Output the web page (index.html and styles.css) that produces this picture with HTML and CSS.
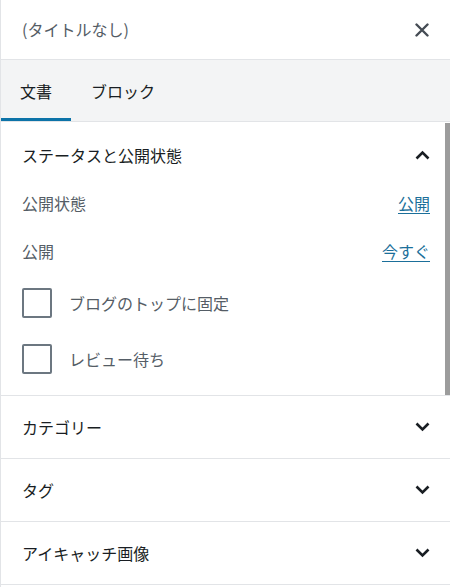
FILE: index.html
```html
<!DOCTYPE html>
<html lang="ja">
<head>
<meta charset="utf-8">
<title>サイドバー</title>
<link rel="stylesheet" href="styles.css">
</head>
<body>
<div class="sidebar">
  <div class="header">
    <span class="title">(タイトルなし)</span>
    <svg class="close" width="14" height="14" viewBox="0 0 14 14"><path d="M1.5 1.5 L12.5 12.5 M12.5 1.5 L1.5 12.5" stroke="#454c54" stroke-width="2.4" stroke-linecap="round" fill="none"/></svg>
  </div>
  <div class="tabs">
    <div class="tab active">文書</div>
    <div class="tab">ブロック</div>
  </div>
  <div class="content">
    <div class="thumb"></div>
    <div class="panel open">
      <div class="panel-head">
        <span>ステータスと公開状態</span>
        <svg class="chev" width="15" height="10" viewBox="0 0 15 10"><path d="M1.5 8.5 L7.5 2.5 L13.5 8.5" stroke="#191e23" stroke-width="2.6" fill="none"/></svg>
      </div>
      <div class="panel-body">
        <div class="row r1"><span>公開状態</span><a class="link">公開</a></div>
        <div class="row r2"><span>公開</span><a class="link">今すぐ</a></div>
        <div class="check c1"><span class="box"></span><span>ブログのトップに固定</span></div>
        <div class="check c2"><span class="box"></span><span>レビュー待ち</span></div>
      </div>
    </div>
    <div class="panel">
      <div class="panel-head">
        <span>カテゴリー</span>
        <svg class="chev" width="15" height="10" viewBox="0 0 15 10"><path d="M1.5 1.5 L7.5 7.5 L13.5 1.5" stroke="#191e23" stroke-width="2.6" fill="none"/></svg>
      </div>
    </div>
    <div class="panel">
      <div class="panel-head">
        <span>タグ</span>
        <svg class="chev" width="15" height="10" viewBox="0 0 15 10"><path d="M1.5 1.5 L7.5 7.5 L13.5 1.5" stroke="#191e23" stroke-width="2.6" fill="none"/></svg>
      </div>
    </div>
    <div class="panel">
      <div class="panel-head">
        <span>アイキャッチ画像</span>
        <svg class="chev" width="15" height="10" viewBox="0 0 15 10"><path d="M1.5 1.5 L7.5 7.5 L13.5 1.5" stroke="#191e23" stroke-width="2.6" fill="none"/></svg>
      </div>
    </div>
  </div>
</div>
</body>
</html>
```
FILE: styles.css
```css
html, body {
  margin: 0;
  padding: 0;
  background: #fff;
}
.sidebar {
  width: 450px;
  height: 587px;
  box-sizing: border-box;
  border-left: 1px solid #e2e4e7;
  overflow: hidden;
  font-family: "Noto Sans CJK JP", "Noto Sans", sans-serif;
  font-size: 16px;
  color: #191e23;
}
.header {
  height: 59px;
  border-bottom: 1px solid #e2e4e7;
  display: flex;
  align-items: center;
  justify-content: space-between;
  padding: 0 21px 0 21px;
}
.title {
  color: #555d66;
  margin-top: -1px;
}
.close {
  display: block;
}
.tabs {
  height: 61px;
  background: #f3f4f5;
  border-bottom: 1px solid #e2e4e7;
  display: flex;
}
.tab {
  height: 61px;
  box-sizing: border-box;
  padding: 3px 20px 0;
  display: flex;
  align-items: center;
  border-bottom: 3px solid transparent;
  color: #191e23;
}
.tab.active {
  border-bottom-color: #0c73a8;
  width: 70px;
  justify-content: center;
  padding: 3px 0 0;
}
.content {
  position: relative;
}
.thumb {
  position: absolute;
  right: 0;
  top: 1px;
  width: 5px;
  height: 272px;
  background: #9c9c9c;
}
.panel {
  border-bottom: 1px solid #e2e4e7;
}
.panel-head {
  height: 62px;
  display: flex;
  align-items: center;
  justify-content: space-between;
  padding: 0 20px 0 21px;
}
.panel.open .panel-head {
  height: 66px;
}
.chev {
  display: block;
}
.panel-body {
  padding: 0 20px 21px 21px;
}
.row {
  height: 30px;
  display: flex;
  align-items: center;
  justify-content: space-between;
  color: #555d66;
}
.r2 {
  margin-top: 18px;
}
.link {
  color: #1b6f9a;
  text-decoration: underline;
  text-underline-offset: 3px;
}
.check {
  height: 30px;
  display: flex;
  align-items: center;
  color: #555d66;
}
.c1 {
  margin-top: 22px;
}
.c2 {
  margin-top: 26px;
}
.box {
  width: 30px;
  height: 30px;
  box-sizing: border-box;
  border: 2px solid #6c7781;
  border-radius: 2px;
  margin-right: 17px;
  flex: none;
}
```
